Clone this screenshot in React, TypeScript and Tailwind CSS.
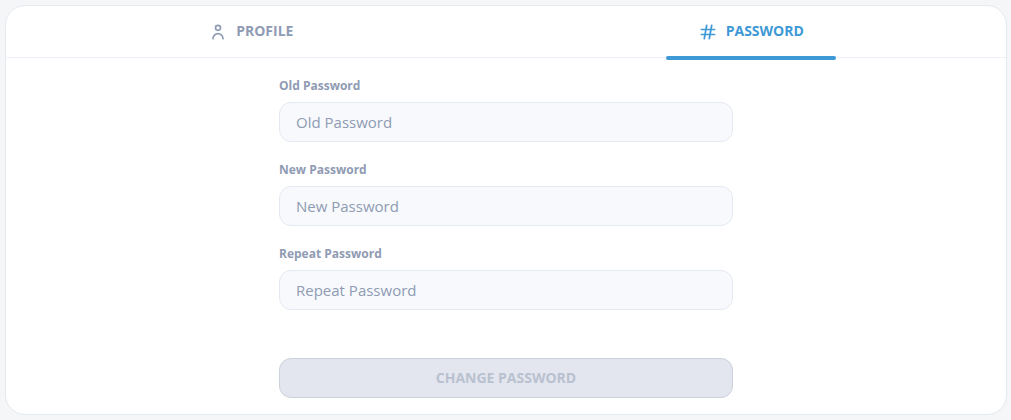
import { useState } from "react";
import type { ReactNode } from "react";

type TabId = "profile" | "password";

function PersonIcon() {
  return (
    <svg viewBox="0 0 24 24" className="mt-0.5 size-5" fill="currentColor" aria-hidden="true">
      <path d="M12 11a4 4 0 1 0-4-4 4 4 0 0 0 4 4zm0-6a2 2 0 1 1-2 2 2 2 0 0 1 2-2z" />
      <path d="M12 13a7 7 0 0 0-7 7 1 1 0 0 0 2 0 5 5 0 0 1 10 0 1 1 0 0 0 2 0 7 7 0 0 0-7-7z" />
    </svg>
  );
}

function HashIcon() {
  return (
    <svg viewBox="0 0 24 24" className="mt-0.5 size-5" fill="currentColor" aria-hidden="true">
      <path d="M20 14h-4.3l.73-4H20a1 1 0 0 0 0-2h-3.21l.69-3.81A1 1 0 0 0 16.64 3a1 1 0 0 0-1.22.82L14.67 8h-3.88l.69-3.81A1 1 0 0 0 10.64 3a1 1 0 0 0-1.22.82L8.67 8H4a1 1 0 0 0 0 2h4.3l-.73 4H4a1 1 0 0 0 0 2h3.21l-.69 3.81A1 1 0 0 0 7.36 21a1 1 0 0 0 1.22-.82L9.33 16h3.88l-.69 3.81a1 1 0 0 0 .84 1.19 1 1 0 0 0 1.22-.82l.75-4.18H20a1 1 0 0 0 0-2zM9.61 14l.73-4h3.88l-.72 4z" />
    </svg>
  );
}

const tabs: { id: TabId; label: string; icon: ReactNode }[] = [
  { id: "profile", label: "PROFILE", icon: <PersonIcon /> },
  { id: "password", label: "PASSWORD", icon: <HashIcon /> },
];

const fields = [
  { id: "old-password", label: "Old Password" },
  { id: "new-password", label: "New Password" },
  { id: "repeat-password", label: "Repeat Password" },
];

export default function App() {
  const [active, setActive] = useState<TabId>("password");
  const [values, setValues] = useState<Record<string, string>>({});
  const ready = fields.every((f) => values[f.id]);

  return (
    <main className="min-h-screen bg-[#f4f6f8] py-[5px] pr-1 pl-[5px] font-['Open_Sans',sans-serif]">
      <section className="rounded-[20px] border border-[#e4e9f2] bg-white">
        <div role="tablist" className="flex justify-around border-b border-[#edf1f7]">
          {tabs.map((tab) => (
            <button
              key={tab.id}
              type="button"
              role="tab"
              aria-selected={active === tab.id}
              onClick={() => setActive(tab.id)}
              className={
                "relative flex items-center gap-2 px-8 pt-[13px] pb-[14px] text-sm leading-6 font-bold " +
                (active === tab.id ? "text-[#3e99d6]" : "text-[#8f9bb3]")
              }
            >
              {tab.icon}
              {tab.label}
              {active === tab.id && (
                <span className="absolute inset-x-0 -bottom-[3px] h-1 rounded-full bg-[#3e99d6]" />
              )}
            </button>
          ))}
        </div>
        <form
          className="mx-auto flex w-full max-w-[454px] flex-col gap-5 pt-5 pb-4"
          onSubmit={(e) => e.preventDefault()}
        >
          {fields.map((f) => (
            <div key={f.id} className="flex flex-col gap-2">
              <label htmlFor={f.id} className="text-xs leading-4 font-bold text-[#8f9bb3]">
                {f.label}
              </label>
              <input
                id={f.id}
                type="password"
                placeholder={f.label}
                value={values[f.id] ?? ""}
                onChange={(e) => setValues({ ...values, [f.id]: e.target.value })}
                className="h-10 w-full rounded-xl border border-[#e4e9f2] bg-[#f7f9fc] px-4 text-[15px] leading-6 text-[#222b45] placeholder:text-[#8f9bb3]"
              />
            </div>
          ))}
          <button
            type="submit"
            disabled={!ready}
            className="mt-7 h-10 rounded-xl border border-[#3e99d6] bg-[#3e99d6] text-sm leading-4 font-bold text-white disabled:border-[#ccd2db] disabled:bg-[#e3e6ee] disabled:text-[#b9c1d0]"
          >
            CHANGE PASSWORD
          </button>
        </form>
      </section>
    </main>
  );
}
